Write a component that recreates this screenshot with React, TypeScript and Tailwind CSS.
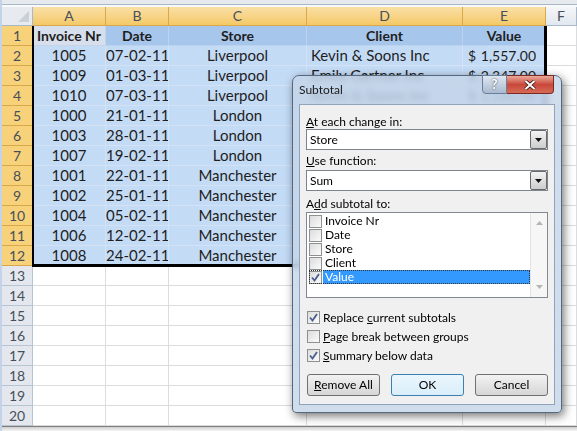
import React from "react";

type row = {
  a: string;
  b: string;
  c: string;
  d: string;
  e: string;
};

const rows: row[] = [
  { a: "1005", b: "07-02-11", c: "Liverpool", d: "Kevin & Soons Inc", e: "1,557.00" },
  { a: "1009", b: "01-03-11", c: "Liverpool", d: "Emily Gartner Inc", e: "2,347.00" },
  { a: "1010", b: "07-03-11", c: "Liverpool", d: "Kevin & Soons Inc", e: "1,120.00" },
  { a: "1000", b: "21-01-11", c: "London", d: "Harper Trading Ltd", e: "845.00" },
  { a: "1003", b: "28-01-11", c: "London", d: "Emily Gartner Inc", e: "2,010.00" },
  { a: "1007", b: "19-02-11", c: "London", d: "Harper Trading Ltd", e: "615.00" },
  { a: "1001", b: "22-01-11", c: "Manchester", d: "Kevin & Soons Inc", e: "1,980.00" },
  { a: "1002", b: "25-01-11", c: "Manchester", d: "Emily Gartner Inc", e: "730.00" },
  { a: "1004", b: "05-02-11", c: "Manchester", d: "Harper Trading Ltd", e: "1,215.00" },
  { a: "1006", b: "12-02-11", c: "Manchester", d: "Kevin & Soons Inc", e: "560.00" },
  { a: "1008", b: "24-02-11", c: "Manchester", d: "Emily Gartner Inc", e: "2,455.00" },
];

const GRID = "grid grid-cols-[31px_73px_63px_138px_156px_83px_31px]";

const selCell = "border-r border-b border-[#d3e2f4] bg-[#c4dbf6] h-[20px] leading-[19px] whitespace-nowrap overflow-hidden";
const emptyCell = "border-r border-b border-[#dadcdd] bg-white h-[20px]";

const Check = ({ on }: { on: boolean }) => (
  <div className="w-[13px] h-[13px] border border-[#8e8f8f] bg-gradient-to-br from-[#dcdcdc] to-[#fbfbfb] flex items-center justify-center shrink-0">
    {on && (
      <svg width="9" height="9" viewBox="0 0 9 9">
        <path d="M1 4.5 L3.5 7.5 L8 1" stroke="#4a5f8e" strokeWidth="1.8" fill="none" />
      </svg>
    )}
  </div>
);

const Combo = ({ value }: { value: string }) => (
  <div className="h-[21px] border border-[#7f848c] bg-white flex items-center">
    <div className="flex-1 pl-[3px] leading-[15px]">{value}</div>
    <div className="w-[17px] h-[19px] border border-[#6a6a6a] rounded-[2px] bg-gradient-to-b from-[#f3f3f3] to-[#cdcdcd] flex items-center justify-center">
      <svg width="7" height="4" viewBox="0 0 7 4">
        <path d="M0 0 H7 L3.5 4 Z" fill="#111" />
      </svg>
    </div>
  </div>
);

const Btn = ({ children, main }: { children: React.ReactNode; main?: boolean }) => (
  <div
    className={`w-[73px] h-[22px] rounded-[3px] border flex items-center justify-center ${
      main
        ? "border-[#3c7fb1] bg-gradient-to-b from-[#eaf6fd] to-[#d9eefa]"
        : "border-[#707070] bg-gradient-to-b from-[#f2f2f2] to-[#d6d6d6]"
    }`}
  >
    {children}
  </div>
);

const Dialog = () => (
  <div className="absolute left-[290px] top-[75px] w-[270px] h-[338px] rounded-t-[7px] rounded-b-[4px] border border-[#56687e] bg-[rgba(196,212,232,0.8)] backdrop-blur-[3px] shadow-[2px_3px_10px_rgba(0,0,0,0.55)] font-['Lato',sans-serif] text-[12px] text-black">
    <div className="h-[28px] flex items-center pl-[6px] text-[#1a1a1a]">Subtotal</div>
    <div className="absolute top-[-1px] right-[7px] flex">
      <div className="w-[25px] h-[19px] rounded-bl-[4px] border border-[#6c7f98] bg-gradient-to-b from-[#dfe7f0] to-[#a9bad0] flex items-center justify-center text-white font-bold text-[13px] [text-shadow:0_0_2px_#333]">
        ?
      </div>
      <div className="w-[47px] h-[19px] rounded-br-[4px] border border-[#7a2a22] border-l-0 bg-gradient-to-b from-[#e9a99c] via-[#c9483a] to-[#d66a56] flex items-center justify-center">
        <svg width="12" height="10" viewBox="0 0 12 10">
          <path d="M1.5 1 L10.5 9 M10.5 1 L1.5 9" stroke="#3a1410" strokeWidth="3.6" />
          <path d="M1.5 1 L10.5 9 M10.5 1 L1.5 9" stroke="#fff" strokeWidth="2" />
        </svg>
      </div>
    </div>
    <div className="mx-[6px] h-[301px] border border-[#8fa3bc] bg-[#f0f0f0] px-[6px] pt-[9px]">
      <div className="h-[15px] leading-[15px]">
        <span className="underline">A</span>t each change in:
      </div>
      <Combo value="Store" />
      <div className="h-[15px] leading-[15px] mt-[3px]">
        <span className="underline">U</span>se function:
      </div>
      <div className="mt-[2px]">
        <Combo value="Sum" />
      </div>
      <div className="h-[15px] leading-[15px] mt-[5px]">
        A<span className="underline">d</span>d subtotal to:
      </div>
      <div className="mt-[1px] h-[86px] border border-[#828790] bg-white flex">
        <div className="flex-1 pt-[1px] pl-[2px]">
          {["Invoice Nr", "Date", "Store", "Client", "Value"].map((t) => (
            <div
              key={t}
              className={`h-[14px] flex items-center ${
                t === "Value" ? "outline outline-1 outline-dotted outline-[#333] -outline-offset-1" : ""
              }`}
            >
              <Check on={t === "Value"} />
              <div
                className={`flex-1 h-[14px] leading-[14px] pl-[2px] ml-[1px] ${
                  t === "Value" ? "bg-[#3399ff] text-white" : ""
                }`}
              >
                {t}
              </div>
            </div>
          ))}
        </div>
        <div className="w-[17px] bg-[#f6f6f6] border-l border-[#e4e4e4] flex flex-col justify-between items-center py-[8px]">
          <svg width="7" height="4" viewBox="0 0 7 4">
            <path d="M0 4 H7 L3.5 0 Z" fill="#b5b5b5" />
          </svg>
          <svg width="7" height="4" viewBox="0 0 7 4">
            <path d="M0 0 H7 L3.5 4 Z" fill="#b5b5b5" />
          </svg>
        </div>
      </div>
      <div className="mt-[10px] pl-[1px]">
        <div className="h-[19px] flex items-center gap-[3px]">
          <Check on />
          <span>
            Replace <span className="underline">c</span>urrent subtotals
          </span>
        </div>
        <div className="h-[19px] flex items-center gap-[3px]">
          <Check on={false} />
          <span>
            <span className="underline">P</span>age break between groups
          </span>
        </div>
        <div className="h-[19px] flex items-center gap-[3px]">
          <Check on />
          <span>
            <span className="underline">S</span>ummary below data
          </span>
        </div>
      </div>
      <div className="mt-[9px] pl-[1px] flex gap-[11px]">
        <Btn>
          <span>
            <span className="underline">R</span>emove All
          </span>
        </Btn>
        <Btn main>OK</Btn>
        <Btn>Cancel</Btn>
      </div>
    </div>
  </div>
);

const App = () => {
  const letters = ["A", "B", "C", "D", "E"];
  return (
    <div className="w-[577px] h-[431px] relative overflow-hidden bg-white border-l-2 border-[#c3d4e8] font-['Lato',sans-serif] text-[#1e1e1e]">
      <div className="h-[5px] bg-[#e6eaef] border-b border-[#aab7c6]" />
      <div className="h-[2px] bg-[#f7f9fb]" />
      {/* column headers */}
      <div className={`${GRID} h-[19px] text-[14px] leading-[18px] text-[#46505c]`}>
        <div className="relative bg-[#e7ebf0] border-r border-b border-[#a9b8c9]">
          <svg className="absolute right-[3px] bottom-[3px]" width="11" height="11" viewBox="0 0 11 11">
            <path d="M11 0 V11 H0 Z" fill="#c9d0d8" />
          </svg>
        </div>
        {letters.map((l) => (
          <div
            key={l}
            className="text-center bg-gradient-to-b from-[#fae0a6] to-[#f4c865] border-r border-b border-[#d9a84a]"
          >
            {l}
          </div>
        ))}
        <div className="text-center bg-gradient-to-b from-[#f4f6f9] to-[#e2e8ef] border-r border-b border-[#a9b8c9]">
          F
        </div>
      </div>
      {/* row 1 */}
      <div className={`${GRID} text-[14px]`}>
        <div className="h-[20px] leading-[19px] text-center text-[14px] text-[#46505c] bg-[#f7d27a] border-r border-b border-[#d9a84a]">
          1
        </div>
        <div className="h-[20px] leading-[19px] text-center font-bold bg-[#d6dfeb] border-r border-b border-[#c6d4e6]">
          Invoice Nr
        </div>
        {["Date", "Store", "Client", "Value"].map((h) => (
          <div
            key={h}
            className="h-[20px] leading-[19px] text-center font-bold bg-[#a7c6ec] border-r border-b border-[#bcd3ef]"
          >
            {h}
          </div>
        ))}
        <div className={emptyCell} />
      </div>
      {/* rows 2-12 */}
      {rows.map((r, i) => (
        <div key={r.a} className={`${GRID} text-[15px]`}>
          <div className="h-[20px] leading-[19px] text-center text-[14px] text-[#46505c] bg-[#f7d27a] border-r border-b border-[#d9a84a]">
            {i + 2}
          </div>
          <div className={`${selCell} text-center`}>{r.a}</div>
          <div className={`${selCell} text-center`}>{r.b}</div>
          <div className={`${selCell} text-center`}>{r.c}</div>
          <div className={`${selCell} pl-[4px]`}>{r.d}</div>
          <div className={`${selCell} flex justify-between pl-[5px] pr-[9px] text-[14px]`}>
            <span>$</span>
            <span>{r.e}</span>
          </div>
          <div className={emptyCell} />
        </div>
      ))}
      {/* rows 13-20 */}
      {Array.from({ length: 8 }).map((_, i) => (
        <div key={i} className={GRID}>
          <div className="h-[20px] leading-[19px] text-center text-[14px] text-[#46505c] bg-[#e4e8ee] border-r border-b border-[#b8c4d2]">
            {i + 13}
          </div>
          <div className={emptyCell} />
          <div className={emptyCell} />
          <div className={emptyCell} />
          <div className={emptyCell} />
          <div className={emptyCell} />
          <div className={emptyCell} />
        </div>
      ))}
      <div className="h-[5px] border-t border-[#7d7d7d] bg-gradient-to-b from-[#cfcfcf] to-[#f4f4f4]" />
      {/* selection outline */}
      <div className="absolute left-[30px] top-[26px] w-[515px] h-[241px] border-l-2 border-r-[3px] border-b-[3px] border-black pointer-events-none" />
      <Dialog />
    </div>
  );
};

export default App;
